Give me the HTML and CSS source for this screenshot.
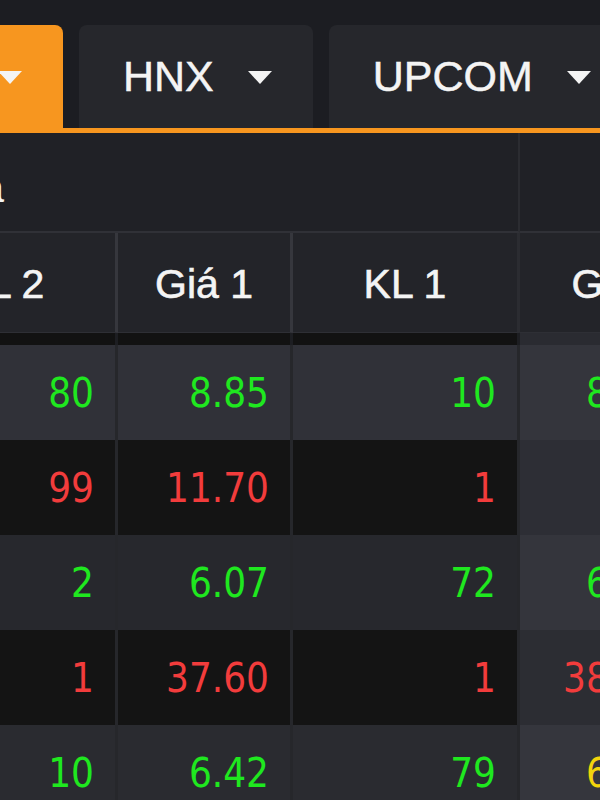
FILE: index.html
```html
<!DOCTYPE html>
<html lang="vi">
<head>
<meta charset="utf-8">
<title>Bảng giá</title>
<link rel="stylesheet" href="styles.css">
</head>
<body>
<div class="topbar">
  <div class="tabs">
    <div class="tab active"><span>HOSE</span><span class="caret"></span></div>
    <div class="tab"><span>HNX</span><span class="caret"></span></div>
    <div class="tab"><span>UPCOM</span><span class="caret"></span></div>
  </div>
</div>
<div class="viewport">
  <div class="board">
    <div class="grp bid span6">Bên mua</div>
    <div class="grp match span3">Khớp lệnh</div>

    <div class="hd">Giá 3</div><div class="hd">KL 3</div><div class="hd">Giá 2</div><div class="hd">KL 2</div><div class="hd">Giá 1</div><div class="hd">KL 1</div>
    <div class="hd m">Giá</div><div class="hd m">KL</div><div class="hd m">+/-</div>

    <div class="sp"></div><div class="sp"></div><div class="sp"></div><div class="sp"></div><div class="sp"></div><div class="sp"></div>
    <div class="sp m"></div><div class="sp m"></div><div class="sp m"></div>

    <div class="c r1 up">8.83</div><div class="c r1 up">150</div><div class="c r1 up">8.84</div><div class="c r1 up">80</div><div class="c r1 up">8.85</div><div class="c r1 up">10</div>
    <div class="c r1 m up">8.86</div><div class="c r1 m up">20</div><div class="c r1 m up">0.06</div>

    <div class="c r2 dn">11.60</div><div class="c r2 dn">5</div><div class="c r2 dn">11.65</div><div class="c r2 dn">99</div><div class="c r2 dn">11.70</div><div class="c r2 dn">1</div>
    <div class="c r2 m"></div><div class="c r2 m"></div><div class="c r2 m"></div>

    <div class="c r3 up">6.05</div><div class="c r3 up">40</div><div class="c r3 up">6.06</div><div class="c r3 up">2</div><div class="c r3 up">6.07</div><div class="c r3 up">72</div>
    <div class="c r3 m up">6.08</div><div class="c r3 m up">12</div><div class="c r3 m up">0.03</div>

    <div class="c r4 dn">37.50</div><div class="c r4 dn">3</div><div class="c r4 dn">37.55</div><div class="c r4 dn">1</div><div class="c r4 dn">37.60</div><div class="c r4 dn">1</div>
    <div class="c r4 m dn">38.00</div><div class="c r4 m dn">1</div><div class="c r4 m dn">-0.10</div>

    <div class="c r5 up">6.40</div><div class="c r5 up">25</div><div class="c r5 up">6.41</div><div class="c r5 up">10</div><div class="c r5 up">6.42</div><div class="c r5 up">79</div>
    <div class="c r5 m ref">6.45</div><div class="c r5 m ref">30</div><div class="c r5 m ref">0.00</div>
  </div>
</div>
</body>
</html>
```

FILE: styles.css
```css
html, body {
  margin: 0;
  padding: 0;
  background: #1c1d22;
  overflow: hidden;
  width: 600px;
  height: 800px;
}

.topbar {
  background: #1c1d22;
  padding-top: 25px;
  border-bottom: 5px solid #f7961f;
  overflow: hidden;
}

.tabs {
  display: flex;
  gap: 16px;
  margin-left: -202px;
  width: max-content;
}

.tab {
  height: 103px;
  padding: 0 41px 0 44px;
  display: flex;
  align-items: center;
  gap: 34px;
  background: #26272c;
  border-radius: 8px 8px 0 0;
  color: #f4f4f4;
  font-family: "Liberation Sans", Arial, sans-serif;
  font-size: 43px;
  -webkit-text-stroke: 0.5px #f4f4f4;
}

.tab.active {
  background: #f7961f;
}

.caret {
  width: 0;
  height: 0;
  border-left: 12.5px solid transparent;
  border-right: 12.5px solid transparent;
  border-top: 13px solid #f4f4f4;
  margin-top: 2px;
}

.viewport {
  overflow: hidden;
  width: 600px;
}

.board {
  display: grid;
  grid-template-columns: 175px 227px 175px 227px 175px 227px 170px 200px 160px;
  grid-template-rows: 100px 100px 12px repeat(5, 95px);
  margin-left: -686px;
  width: max-content;
  font-family: "Liberation Sans", Arial, sans-serif;
}

.grp {
  box-sizing: border-box;
  background: #202126;
  border-bottom: 2px solid #303137;
  color: #f4f4f4;
  font-size: 40px;
  display: flex;
  align-items: center;
  justify-content: center;
  padding-top: 12px;
}

.span6 { grid-column: span 6; border-right: 2px solid #2b2c31; padding-left: 16px; }
.span3 { grid-column: span 3; }

.hd {
  box-sizing: border-box;
  background: #232429;
  border-right: 3px solid #36373d;
  color: #f4f4f4;
  font-size: 41px;
  -webkit-text-stroke: 0.6px #f4f4f4;
  display: flex;
  align-items: center;
  justify-content: center;
  border-bottom: 1px solid #2e2f35;
  padding-top: 4px;
}

.hd:nth-child(8) { border-right-color: #2b2c31; }

.sp {
  background: #121212;
  box-sizing: border-box;
  border-right: 3px solid #1d1e22;
}
.sp.m { background: #2a2b31; border-right-color: #2a2b31; }

.c {
  box-sizing: border-box;
  border-right: 3px solid #26272b;
  font-family: "DejaVu Sans Condensed", "DejaVu Sans", sans-serif;
  font-stretch: condensed;
  font-size: 40px;
  display: flex;
  align-items: center;
  justify-content: flex-end;
  padding-right: 21px;
}

.r1 { background: #303138; }
.r2 { background: #141414; }
.r3 { background: #27282d; }
.r4 { background: #141414; }
.r5 { background: #2a2b30; }

.r1.m { background: #34353c; }
.r2.m { background: #2d2e35; }
.r3.m { background: #34353c; }
.r4.m { background: #2c2d33; }
.r5.m { background: #35363d; }

.c.m { border-right-color: #2a2b30; }

.up { color: #1fe81f; }
.dn { color: #f23c3c; }
.ref { color: #f2d40c; }
```
